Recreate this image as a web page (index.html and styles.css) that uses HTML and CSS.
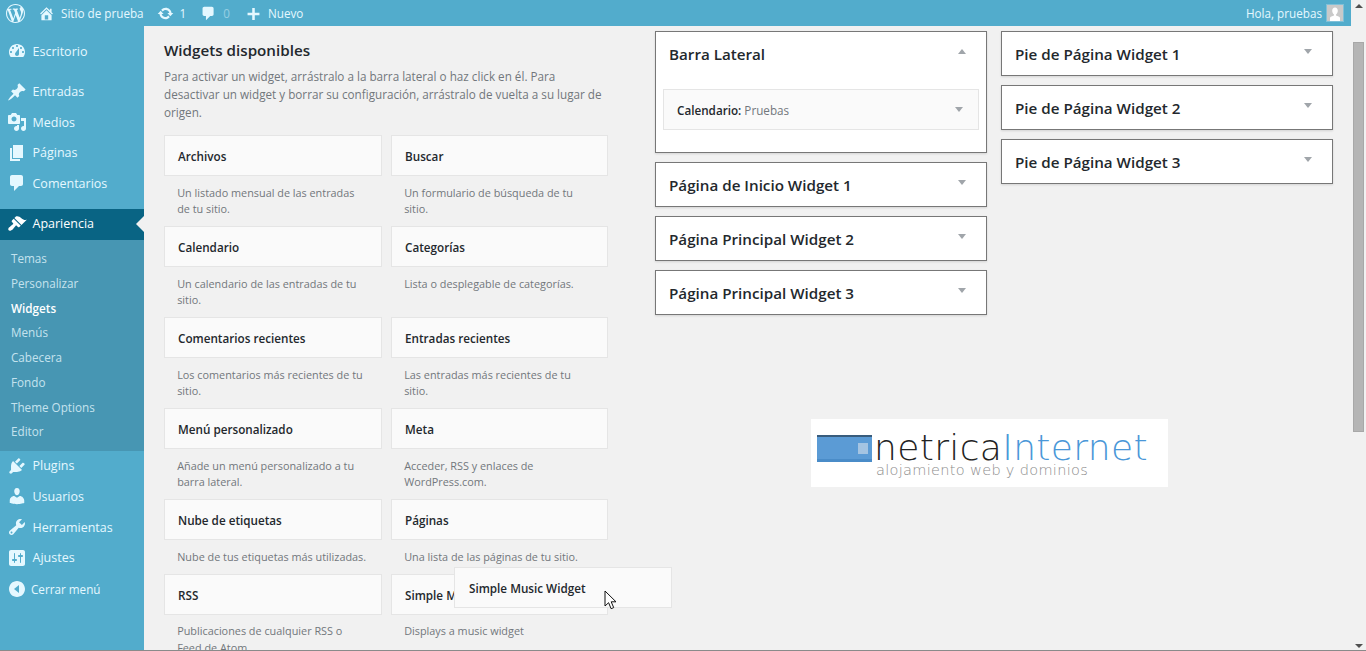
FILE: index.html
```html
<!DOCTYPE html>
<html lang="es">
<head>
<meta charset="utf-8">
<title>Widgets</title>
<link rel="stylesheet" href="styles.css">
</head>
<body>
<div class="window">
  <div class="page">
    <header class="adminbar">
      <div class="bar-left">
        <svg class="bar-wp" viewBox="0 0 20 20"><path d="M20 10c0-5.51-4.49-10-10-10C4.48 0 0 4.49 0 10c0 5.52 4.48 10 10 10 5.51 0 10-4.48 10-10zM7.78 15.37L4.37 6.22c.55-.02 1.17-.08 1.17-.08.5-.06.44-1.13-.06-1.11 0 0-1.45.11-2.37.11-.18 0-.37 0-.58-.01C4.12 2.69 6.87 1.11 10 1.11c2.33 0 4.45.87 6.05 2.34-.68-.11-1.65.39-1.65 1.58 0 .74.45 1.36.9 2.1.35.61.55 1.36.55 2.46 0 1.49-1.4 5-1.4 5l-3.03-8.37c.54-.02.82-.17.82-.17.5-.05.44-1.25-.06-1.22 0 0-1.44.12-2.38.12-.87 0-2.33-.12-2.33-.12-.5-.03-.56 1.2-.06 1.22l.92.08 1.26 3.41zM17.41 10c.24-.64.74-1.87.43-4.25.7 1.29 1.05 2.71 1.05 4.25 0 3.29-1.73 6.24-4.4 7.78.97-2.59 1.94-5.2 2.92-7.78zM6.1 18.09C3.12 16.65 1.11 13.53 1.11 10c0-1.3.23-2.48.72-3.59C3.25 10.3 4.67 14.2 6.1 18.09zm4.03-6.63l2.58 6.98c-.86.29-1.76.45-2.71.45-.79 0-1.57-.11-2.29-.33.81-2.38 1.62-4.74 2.42-7.1z"/></svg>
        <svg class="bar-icon home" viewBox="0 0 20 20"><path d="M16 8.5l1.53 1.53-1.06 1.06L10 4.62l-6.47 6.47-1.06-1.06L10 2.5l4 4v-2h2v4zm-6-2.46l6 5.99V18H4v-5.97zM12 17v-5H8v5h4z"/></svg>
        <span class="bar-site">Sitio de prueba</span>
        <svg class="bar-icon update" viewBox="0 0 20 20"><path d="M10.2 3.28c3.53 0 6.43 2.61 6.92 6h2.08l-3.5 4-3.5-4h2.32c-.45-1.97-2.21-3.45-4.32-3.45-1.45 0-2.73.71-3.54 1.78L4.95 5.66C6.23 4.2 8.11 3.28 10.2 3.28zm-.4 13.44c-3.52 0-6.43-2.61-6.92-6H.8l3.5-4c1.17 1.33 2.33 2.67 3.5 4H5.48c.45 1.97 2.21 3.45 4.32 3.45 1.45 0 2.73-.71 3.54-1.78l1.71 1.95c-1.28 1.46-3.15 2.38-5.25 2.38z"/></svg>
        <span class="bar-count">1</span>
        <svg class="bar-icon comment" viewBox="0 0 20 20"><path d="M5 2h9c1.1 0 2 .9 2 2v7c0 1.1-.9 2-2 2h-2l-5 5v-5H5c-1.1 0-2-.9-2-2V4c0-1.1.9-2 2-2z"/></svg>
        <span class="bar-zero">0</span>
        <svg class="bar-icon plus" viewBox="0 0 20 20"><path d="M17 9v3h-5.5v5.500h-3V12H3V9h5.500V3.500h3V9z"/></svg>
        <span class="bar-new">Nuevo</span>
      </div>
      <div class="bar-right">
        <span>Hola, pruebas</span>
        <svg class="avatar" viewBox="0 0 16 16"><rect width="16" height="16" fill="#c9c9c9"/><path fill="#fff" d="M8 2.500c1.800 0 2.800 1.500 2.800 3.200 0 1.700-1 3.300-1.800 3.800v1c1.500.5 4 1 4 2.500v3H3v-3c0-1.500 2.500-2 4-2.500v-1c-.8-.5-1.800-2.100-1.800-3.800C5.200 4 6.200 2.500 8 2.500z"/></svg>
      </div>
    </header>
    <div class="body">
      <nav class="side">
        <a class="item first"><svg viewBox="0 0 20 20"><path fill-rule="evenodd" d="M3.76 16h12.48c1.100-1.370 1.760-3.110 1.760-5 0-4.420-3.580-8-8-8s-8 3.580-8 8c0 1.890.66 3.630 1.760 5zM10 4c.55 0 1 .45 1 1s-.45 1-1 1-1-.45-1-1 .45-1 1-1zM6 6c.55 0 1 .45 1 1s-.45 1-1 1-1-.45-1-1 .45-1 1-1zm8 0c.55 0 1 .45 1 1s-.45 1-1 1-1-.45-1-1 .45-1 1-1zm-5.370 5.550L12 7v6c0 1.100-.9 2-2 2s-2-.9-2-2c0-.57.24-1.080.63-1.450zM4 10c.55 0 1 .45 1 1s-.45 1-1 1-1-.45-1-1 .45-1 1-1zm12 0c.55 0 1 .45 1 1s-.45 1-1 1-1-.45-1-1 .45-1 1-1z"/></svg><span>Escritorio</span></a>
        <a class="item sep"><svg viewBox="0 0 20 20"><path d="M10.440 3.020l1.820-1.820 6.360 6.350-1.830 1.820c-1.050-.68-2.480-.57-3.410.36l-.75.75c-.92.93-1.040 2.350-.35 3.410l-1.830 1.820-2.410-2.410-2.800 2.790c-.42.42-3.380 2.710-3.800 2.290s1.860-3.390 2.280-3.810l2.790-2.790L4.100 9.360l1.830-1.820c1.050.69 2.480.57 3.400-.36l.75-.75c.93-.92 1.050-2.350.36-3.410z"/></svg><span>Entradas</span></a>
        <a class="item"><svg viewBox="0 0 20 20"><path fill-rule="evenodd" d="M13 11V4c0-.55-.45-1-1-1h-1.670L9 1H5L3.670 3H2c-.55 0-1 .45-1 1v7c0 .55.45 1 1 1h10c.55 0 1-.45 1-1zM7 4.500c1.380 0 2.500 1.120 2.500 2.500S8.380 9.500 7 9.500 4.500 8.380 4.500 7 5.620 4.500 7 4.500zM14 6h5v10.500c0 1.380-1.120 2.500-2.500 2.500S14 17.880 14 16.500s1.120-2.500 2.500-2.500c.17 0 .34.020.5.050V9h-3V6zm-4 8.050V13h2v3.500c0 1.380-1.120 2.500-2.500 2.500S7 17.880 7 16.500 8.120 14 9.500 14c.17 0 .34.020.5.050z"/></svg><span>Medios</span></a>
        <a class="item"><svg viewBox="0 0 20 20"><path d="M6 15V2h10v13H6zm-1 1h8v2H3V5h2v11z"/></svg><span>Páginas</span></a>
        <a class="item"><svg viewBox="0 0 20 20"><path d="M5 2h9c1.100 0 2 .9 2 2v7c0 1.100-.9 2-2 2h-2l-5 5v-5H5c-1.100 0-2-.9-2-2V4c0-1.100.9-2 2-2z"/></svg><span>Comentarios</span></a>
        <a class="item current"><svg viewBox="0 0 20 20"><path d="M14.480 11.060L7.410 3.990l1.500-1.500c.5-.56 2.300-.47 3.510.32 1.210.8 1.430 1.280 2.910 2.100 1.180.64 2.450 1.260 4.450.85zm-.71.71L6.700 4.700 4.930 6.470c-.39.39-.39 1.020 0 1.410l1.060 1.060c.39.39.39 1.030 0 1.420-.6.6-1.430 1.110-2.210 1.690-.35.26-.7.53-1.010.84C1.430 13.230.78 15.400 1.630 16.250c.83.83 3.020.21 4.350-1.120.31-.31.58-.66.84-1.010.58-.78 1.090-1.610 1.690-2.210.39-.39 1.030-.39 1.420 0l1.060 1.060c.39.39 1.020.39 1.410 0z"/></svg><span>Apariencia</span><i class="notch"></i></a>
        <ul class="sub">
          <li>Temas</li>
          <li>Personalizar</li>
          <li class="on">Widgets</li>
          <li>Menús</li>
          <li>Cabecera</li>
          <li>Fondo</li>
          <li>Theme Options</li>
          <li>Editor</li>
        </ul>
        <a class="item"><svg viewBox="0 0 20 20"><path d="M13.110 4.360L9.870 7.600 8 5.730l3.240-3.240c.35-.34 1.050-.2 1.560.32.52.51.66 1.210.31 1.550zm-8 1.770l.91-1.120 9.010 9.010-1.190.84c-.71.71-2.630 1.160-3.820 1.160H6.140L4.900 17.260c-.59.59-1.540.59-2.120 0-.59-.58-.59-1.530 0-2.120l1.240-1.240v-3.880c0-1.130.4-3.190 1.090-3.890zm7.260 3.970l3.240-3.240c.34-.35 1.040-.21 1.550.31.52.51.66 1.210.31 1.550l-3.240 3.250z"/></svg><span>Plugins</span></a>
        <a class="item"><svg viewBox="0 0 20 20"><path d="M10 9.250c-2.270 0-2.730-3.440-2.730-3.440C7 4.020 7.820 2 9.970 2c2.160 0 2.980 2.020 2.710 3.810 0 0-.41 3.440-2.680 3.440zm0 2.570L12.720 10c2.390 0 4.520 2.330 4.520 4.530v2.490s-3.650 1.130-7.240 1.130c-3.650 0-7.240-1.130-7.240-1.130v-2.490c0-2.250 1.940-4.480 4.470-4.480z"/></svg><span>Usuarios</span></a>
        <a class="item"><svg viewBox="0 0 20 20"><path fill-rule="evenodd" d="M16.680 9.770c-1.340 1.340-3.300 1.670-4.950.99l-5.410 6.520c-.99.99-2.590.99-3.580 0s-.99-2.590 0-3.570l6.520-5.420c-.68-1.650-.35-3.610.99-4.950 1.280-1.280 3.120-1.620 4.720-1.060l-2.890 2.890 2.820 2.820 2.860-2.870c.53 1.580.18 3.390-1.080 4.650zM3.810 16.210c.4.39 1.040.39 1.430 0 .4-.4.4-1.040 0-1.430-.39-.4-1.030-.4-1.430 0-.39.39-.39 1.030 0 1.430z"/></svg><span>Herramientas</span></a>
        <a class="item"><svg viewBox="0 0 20 20"><path fill-rule="evenodd" d="M18 16V4c0-1.100-.9-2-2-2H4c-1.100 0-2 .9-2 2v12c0 1.100.9 2 2 2h12c1.100 0 2-.9 2-2zM8 11h1c.55 0 1 .45 1 1s-.45 1-1 1H8v1.500c0 .28-.22.5-.5.5s-.5-.22-.5-.5V13H6c-.55 0-1-.45-1-1s.45-1 1-1h1V5.500c0-.28.22-.5.5-.5s.5.22.5.5V11zm5-2h-1c-.55 0-1-.45-1-1s.45-1 1-1h1V5.500c0-.28.22-.5.5-.5s.5.22.5.5V7h1c.55 0 1 .45 1 1s-.45 1-1 1h-1v5.500c0 .28-.22.5-.5.5s-.5-.22-.5-.5V9z"/></svg><span>Ajustes</span></a>
        <a class="item collapse"><svg viewBox="0 0 20 20"><path fill-rule="evenodd" d="M10 2c4.420 0 8 3.580 8 8s-3.580 8-8 8-8-3.580-8-8 3.580-8 8-8zm2 12V6l-5 4z"/></svg><span>Cerrar menú</span></a>
      </nav>
      <main class="content">
        <section class="available">
          <h2>Widgets disponibles</h2>
          <p class="intro">Para activar un widget, arrástralo a la barra lateral o haz click en él. Para desactivar un widget y borrar su configuración, arrástralo de vuelta a su lugar de origen.</p>
          <div class="grid">
            <div class="cell"><div class="card">Archivos</div><p>Un listado mensual de las entradas de tu sitio.</p></div>
            <div class="cell"><div class="card">Buscar</div><p>Un formulario de búsqueda de tu sitio.</p></div>
            <div class="cell"><div class="card">Calendario</div><p>Un calendario de las entradas de tu sitio.</p></div>
            <div class="cell"><div class="card">Categorías</div><p>Lista o desplegable de categorías.</p></div>
            <div class="cell"><div class="card">Comentarios recientes</div><p>Los comentarios más recientes de tu sitio.</p></div>
            <div class="cell"><div class="card">Entradas recientes</div><p>Las entradas más recientes de tu sitio.</p></div>
            <div class="cell"><div class="card">Menú personalizado</div><p>Añade un menú personalizado a tu barra lateral.</p></div>
            <div class="cell"><div class="card">Meta</div><p>Acceder, RSS y enlaces de WordPress.com.</p></div>
            <div class="cell"><div class="card">Nube de etiquetas</div><p>Nube de tus etiquetas más utilizadas.</p></div>
            <div class="cell"><div class="card">Páginas</div><p>Una lista de las páginas de tu sitio.</p></div>
            <div class="cell"><div class="card">RSS</div><p>Publicaciones de cualquier RSS o Feed de Atom.</p></div>
            <div class="cell"><div class="card">Simple Music Widget</div><p>Displays a music widget</p></div>
          </div>
        </section>
        <section class="areas">
          <div class="columns">
            <div class="col">
              <div class="area open">
                <div class="area-head"><h3>Barra Lateral</h3><i class="caret up"></i></div>
                <div class="placed"><span><b>Calendario:</b> Pruebas</span><i class="caret"></i></div>
              </div>
              <div class="area"><div class="area-head"><h3>Página de Inicio Widget 1</h3><i class="caret"></i></div></div>
              <div class="area"><div class="area-head"><h3>Página Principal Widget 2</h3><i class="caret"></i></div></div>
              <div class="area"><div class="area-head"><h3>Página Principal Widget 3</h3><i class="caret"></i></div></div>
            </div>
            <div class="col">
              <div class="area"><div class="area-head"><h3>Pie de Página Widget 1</h3><i class="caret"></i></div></div>
              <div class="area"><div class="area-head"><h3>Pie de Página Widget 2</h3><i class="caret"></i></div></div>
              <div class="area"><div class="area-head"><h3>Pie de Página Widget 3</h3><i class="caret"></i></div></div>
            </div>
          </div>
          <div class="logo">
            <div class="logo-mark"><i></i></div>
            <div class="logo-text">
              <div class="logo-name">netrica<em>Internet</em></div>
              <div class="logo-tag">alojamiento web y dominios</div>
            </div>
          </div>
        </section>
      </main>
    </div>
  </div>
  <aside class="scrollbar">
    <i class="sb-up"></i>
    <div class="sb-track"><div class="sb-thumb"></div></div>
    <i class="sb-down"></i>
  </aside>
  <div class="drag-helper">Simple Music Widget</div>
  <svg class="cursor" viewBox="0 0 13 20"><path fill="#fff" stroke="#111" stroke-width="1" d="M1 1v15l3.600-3.300 2.500 6 2.600-1.100-2.500-5.800H12z"/></svg>
</div>
</body>
</html>
```
FILE: styles.css
```css
* { box-sizing: border-box; }
html, body { margin: 0; padding: 0; height: 100%; overflow: hidden; }
body { font-family: "Open Sans", "Noto Sans", sans-serif; color: #444; background: #f1f1f1; }
.window { position: relative; display: flex; height: 651px; overflow: hidden; border-bottom: 1px solid #8a8a8a; }
.page { flex: 1; min-width: 0; display: flex; flex-direction: column; }

.adminbar { height: 26px; flex: none; background: #52accc; color: #e5f8ff; font-size: 11.700px; display: flex; justify-content: space-between; align-items: center; padding: 0 8px 0 6px; }
.adminbar svg { fill: #e5f8ff; display: block; flex: none; }
.bar-left, .bar-right { display: flex; align-items: center; }
.bar-wp { width: 19px; height: 19px; margin-right: 13px; }
.bar-icon { width: 17px; height: 17px; }
.bar-site { margin-left: 6px; margin-right: 13px; }
.bar-count { margin-left: 6px; margin-right: 14px; }
.bar-zero { margin-left: 6px; margin-right: 15px; opacity: .45; }
.bar-new { margin-left: 6px; }
.avatar { width: 16px; height: 16px; margin-left: 5px; outline: 1px solid #7fc0d8; }

.body { flex: 1; min-height: 0; display: flex; }
.side { width: 144px; flex: none; background: #52accc; color: #e5f8ff; font-size: 12.500px; }
.item { display: flex; align-items: center; height: 30.600px; padding-left: 7px; position: relative; }
.item svg { width: 20px; height: 20px; fill: #e5f8ff; flex: none; margin-right: 5.500px; }
.item.first { margin-top: 10px; }
.item.sep { margin-top: 9.700px; }
.item.current { margin-top: 10.300px; height: 31px; padding-bottom: 1px; background: #096484; color: #fff; }
.item.current svg { fill: #fff; }
.notch { position: absolute; right: 0; top: 50%; margin-top: -8px; border: 8px solid transparent; border-right-color: #f1f1f1; border-left-width: 0; }
.item.collapse { margin-top: .5px; padding-left: 7px; font-size: 11.700px; }
.item.collapse svg { margin-right: 4px; }
.sub { list-style: none; margin: 0; padding: 6.100px 0 6.500px; background: #4796b3; color: rgba(229, 248, 255, .8); font-size: 11.700px; }
.sub li { height: 24.750px; line-height: 24.750px; padding-left: 11px; }
.sub li.on { color: #fff; font-weight: 600; }

.content { flex: 1; min-width: 0; display: flex; padding: 5px 18px 0 20px; height: 100%; overflow: hidden; }
.available { width: 444px; flex: none; }
h2 { margin: 9px 0 0; font-size: 15.200px; line-height: 21px; font-weight: 600; color: #23282d; }
.intro { margin: 6px 0 14px; font-size: 11.700px; line-height: 18px; color: #72777c; }
.grid { display: grid; grid-template-columns: 218px 217px; column-gap: 9px; }
.card { height: 41px; display: flex; align-items: center; padding: 1px 13px 0; background: #fafafa; border: 1px solid #e5e5e5; font-size: 11.700px; font-weight: 600; color: #23282d; }
.cell p { margin: 0; padding: 8.500px 15px 8.500px 13.200px; font-size: 10.850px; line-height: 16.500px; color: #72777c; }

.areas { margin-left: 47px; flex: 1; min-width: 0; }
.columns { display: flex; gap: 14px; }
.col { width: 332px; flex: none; }
.area { background: #fff; border: 1px solid #777; box-shadow: 0 1px 2px rgba(0, 0, 0, .12); margin-bottom: 9px; }
.area.open { padding: 0 7px 22px; }
.area-head { height: 43px; display: flex; justify-content: space-between; align-items: center; padding: 0 20px 0 13px; }
.open .area-head { padding: 0 13px 0 6px; }
h3 { margin: 0; font-size: 15.200px; font-weight: 600; color: #23282d; }
.caret { display: block; width: 0; height: 0; border: 4px solid transparent; border-top: 5px solid #a0a5aa; border-bottom-width: 0; margin-top: -5px; }
.caret.up { border-top-width: 0; border-bottom: 5px solid #a0a5aa; margin-top: -5px; }
.placed { margin-top: 14px; height: 41px; display: flex; justify-content: space-between; align-items: center; padding: 0 15px 0 13px; background: #fafafa; border: 1px solid #e5e5e5; font-size: 11.700px; color: #72777c; }
.placed b { font-weight: 600; color: #23282d; }
.placed .caret { margin-top: 0; }

.logo { margin: 95px 0 0 156px; width: 357px; height: 68px; background: #fff; display: flex; align-items: flex-start; padding: 16px 0 0 6px; }
.logo-mark { position: relative; width: 55px; height: 27px; background: #5b9bd5; border-top: 2px solid #385c7c; border-bottom: 3px solid #4a8cc8; }
.logo-mark i { position: absolute; right: 4px; top: 6px; width: 10px; height: 11px; background: #a4c4e2; }
.logo-text { margin-left: 4px; font-family: "DejaVu Sans", sans-serif; font-weight: 200; }
.logo-name { font-size: 36px; line-height: 30px; margin-top: -2px; margin-left: -2px; color: #222; letter-spacing: .35px; }
.logo-name em { font-style: normal; color: #4a97d8; }
.logo-tag { font-size: 14.500px; line-height: 18px; margin-top: -2px; color: #8c8c8c; letter-spacing: .32px; }

.scrollbar { width: 15px; flex: none; background: #f1f1f1; display: flex; flex-direction: column; align-items: center; position: relative; }
.sb-up { margin-top: 4px; border: 4px solid transparent; border-bottom: 4px solid #505050; border-top-width: 0; }
.sb-track { flex: 1; width: 100%; padding: 34px 2px 0; }
.sb-thumb { height: 390px; background: #b5b5b5; border: 1px solid #a8a8a8; }
.sb-down { margin-bottom: 2px; border: 4px solid transparent; border-top: 4px solid #505050; border-bottom-width: 0; }

.drag-helper { position: absolute; left: 454px; top: 567px; width: 218px; height: 41px; display: flex; align-items: center; padding: 0 14px; background: #fafafa; border: 1px solid #e5e5e5; font-size: 11.700px; font-weight: 600; color: #23282d; }
.cursor { position: absolute; left: 604px; top: 590px; width: 13px; height: 20px; }
```
